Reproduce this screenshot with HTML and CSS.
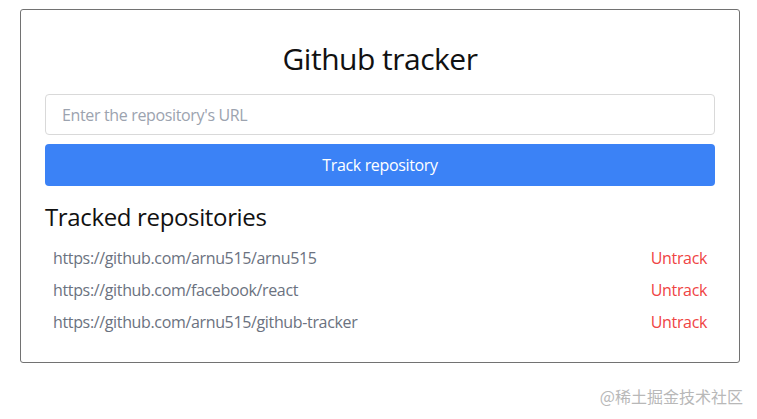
FILE: index.html
```html
<!DOCTYPE html>
<html lang="en">
<head>
<meta charset="utf-8">
<title>Github tracker</title>
<link rel="stylesheet" href="styles.css">
</head>
<body>
<main class="card">
  <h1 class="title">Github tracker</h1>
  <form class="track-form">
    <input class="url-input" type="text" placeholder="Enter the repository's URL">
    <button class="track-btn" type="button">Track repository</button>
  </form>
  <h2 class="subtitle">Tracked repositories</h2>
  <ul class="repo-list">
    <li class="repo"><span class="repo-url">https://github.com/arnu515/arnu515</span><a class="untrack">Untrack</a></li>
    <li class="repo"><span class="repo-url">https://github.com/facebook/react</span><a class="untrack">Untrack</a></li>
    <li class="repo"><span class="repo-url">https://github.com/arnu515/github-tracker</span><a class="untrack">Untrack</a></li>
  </ul>
</main>
<div class="watermark">@稀土掘金技术社区</div>
</body>
</html>
```
FILE: styles.css
```css
* { box-sizing: border-box; }
html, body { margin: 0; padding: 0; background: #fff; }
body {
  font-family: "Open Sans", "Noto Sans", sans-serif;
  color: #000;
  width: 757px;
  height: 419px;
  overflow: hidden;
  position: relative;
}
.card {
  margin: 9px 0 0 20px;
  width: 720px;
  border: 1px solid #727272;
  border-radius: 3px;
  padding: 31px 24px 23px;
}
.title {
  margin: 0 0 17px;
  font-size: 30px;
  line-height: 36px;
  font-weight: 400;
  letter-spacing: -0.5px;
  text-align: center;
  color: #111;
}
.track-form {
  display: flex;
  flex-direction: column;
  gap: 9px;
}
.url-input {
  height: 41px;
  border: 1px solid #d9d9d9;
  border-radius: 4px;
  padding: 0 16px;
  font-family: inherit;
  font-size: 16px;
  letter-spacing: -0.35px;
  color: #333;
  outline: none;
}
.url-input::placeholder { color: #9ca3af; }
.track-btn {
  height: 42px;
  border: 0;
  border-radius: 4px;
  background: #3b82f6;
  color: #fff;
  font-family: inherit;
  font-size: 16px;
  letter-spacing: -0.35px;
}
.subtitle {
  margin: 15px 0 9px;
  font-size: 24px;
  line-height: 32px;
  font-weight: 400;
  letter-spacing: -0.35px;
  color: #111;
}
.repo-list {
  list-style: none;
  margin: 0;
  padding: 0 0 1px;
}
.repo {
  display: flex;
  justify-content: space-between;
  padding: 4px 8px;
  font-size: 16px;
  line-height: 24px;
  letter-spacing: -0.35px;
}
.repo-url { color: #6b7280; }
.untrack { color: #ef4444; cursor: pointer; }
.watermark {
  position: absolute;
  right: 14px;
  bottom: 13px;
  font-family: "Noto Sans CJK SC", sans-serif;
  font-size: 16px;
  line-height: 20px;
  color: #b8b8b8;
}
```
